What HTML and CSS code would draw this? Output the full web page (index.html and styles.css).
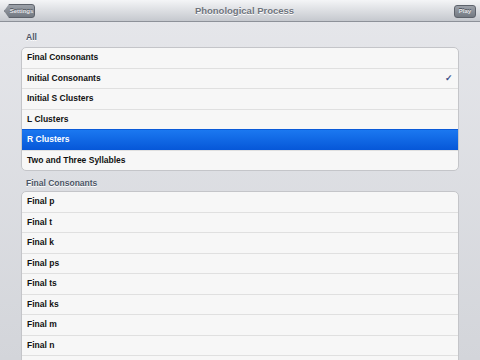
FILE: index.html
```html
<!DOCTYPE html>
<html lang="en">
<head>
    <meta charset="UTF-8">
    <meta name="viewport" content="width=device-width, initial-scale=1.0">
    <title>Phonological Process</title>
    <link rel="stylesheet" href="styles.css">
</head>
<body>

    <div class="navbar">
        <button type="button" class="back-btn">Settings</button>
        <div class="nav-title">Phonological Process</div>
        <button type="button" class="play-btn">Play</button>
    </div>

    <div class="content">
        <div class="section-title">All</div>
        <ul class="group">
            <li>Final Consonants</li>
            <li class="checked">Initial Consonants <span class="check">&#10003;</span></li>
            <li>Initial S Clusters</li>
            <li>L Clusters</li>
            <li class="selected">R Clusters</li>
            <li>Two and Three Syllables</li>
        </ul>

        <div class="section-title second">Final Consonants</div>
        <ul class="group">
            <li>Final p</li>
            <li>Final t</li>
            <li>Final k</li>
            <li>Final ps</li>
            <li>Final ts</li>
            <li>Final ks</li>
            <li>Final m</li>
            <li>Final n</li>
            <li></li>
        </ul>
    </div>

</body>
</html>
```

FILE: styles.css
```css
html, body {
    margin: 0;
    padding: 0;
    height: 100%;
    overflow: hidden;
}
body {
    font-family: "Liberation Sans", Arial, sans-serif;
    background: linear-gradient(#e6e7eb, #d3d5da);
}
.navbar {
    height: 21px;
    border-bottom: 1px solid #8d9199;
    background: linear-gradient(#f4f5f7, #c5c8ce);
    display: flex;
    align-items: center;
    justify-content: space-between;
    padding: 0 4px 0 4px;
}
.nav-title {
    color: #6f747d;
    font-size: 9.5px;
    font-weight: bold;
    text-shadow: 0 1px 0 #fff;
}
.back-btn, .play-btn {
    font-family: inherit;
    font-size: 6px;
    font-weight: bold;
    color: #e8e9ec;
    border: 1px solid #5d626b;
    background: linear-gradient(#9ca1a9, #737982);
    padding: 0;
    height: 14px;
    text-shadow: 0 -1px 0 #4b5058;
    margin-top: 1px;
}
.back-btn {
    width: 31px;
    border-radius: 2px 3px 3px 2px;
    clip-path: polygon(5px 0, 100% 0, 100% 100%, 5px 100%, 0 50%);
    padding-left: 4px;
}
.play-btn {
    width: 22px;
    height: 13px;
    border-radius: 3px;
}
.content {
    padding: 0 21px;
}
.section-title {
    font-size: 8.5px;
    font-weight: bold;
    color: #4c5566;
    text-shadow: 0 1px 0 #fff;
    padding: 10px 0 5px 5px;
}
.section-title.second {
    padding: 7px 0 3px 5px;
}
.group {
    list-style: none;
    margin: 0;
    padding: 0;
    background: #f7f7f7;
    border: 1px solid #c4c5c9;
    border-radius: 5px;
    overflow: hidden;
}
.group li {
    height: 19.5px;
    line-height: 19.5px;
    border-top: 1px solid #e0e0e0;
    font-size: 8.5px;
    font-weight: bold;
    color: #111;
    padding: 0 5px;
    display: flex;
    justify-content: space-between;
}
.group li:first-child {
    border-top: none;
}
.group li.selected {
    background: linear-gradient(#1b78f0, #0657d8);
    color: #fff;
    border-top-color: #0a5ad8;
}
.check {
    color: #3b5089;
    font-size: 9px;
}
```
